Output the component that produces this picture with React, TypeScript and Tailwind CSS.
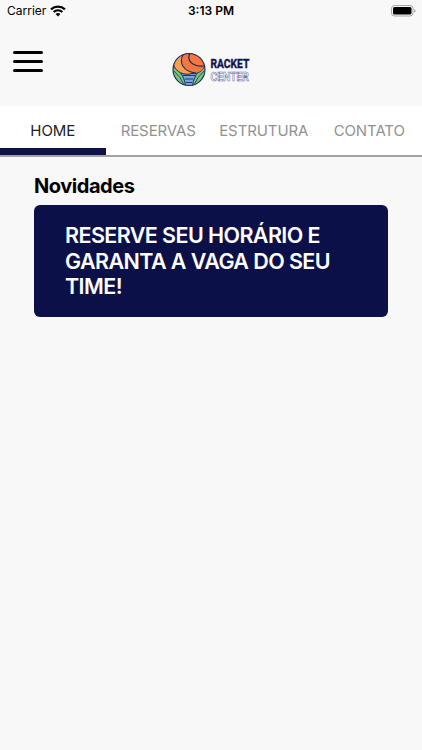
const tabs = [
  { label: "HOME", active: true },
  { label: "RESERVAS", active: false },
  { label: "ESTRUTURA", active: false },
  { label: "CONTATO", active: false },
];

function Wifi() {
  return (
    <svg width="16" height="12" viewBox="0 0 16 12" className="ml-[4px]" fill="none" stroke="#050505">
      <path d="M1 4.300C5 .6 11 .6 15 4.300" strokeWidth="2.300" />
      <path d="M3.600 7.100c2.500-2.300 6.300-2.300 8.800 0" strokeWidth="2.100" />
      <path d="M5.600 9c1.400-1.200 3.400-1.200 4.800 0L8 11.400z" fill="#050505" stroke="none" />
    </svg>
  );
}

function Battery() {
  return (
    <svg width="25" height="12" viewBox="0 0 25 12" className="mr-1.5">
      <rect x=".5" y=".5" width="21.5" height="10.5" rx="3" fill="none" stroke="#a5a5a5" />
      <rect x="2" y="2" width="18.5" height="7.5" rx="1.5" fill="#000" />
      <path d="M23.300 4v3.800q1.200-.6 1.200-1.900T23.300 4" fill="#999" />
    </svg>
  );
}

function Logo() {
  return (
    <svg width="84" height="44" viewBox="169 48 84 44">
      <defs>
        <clipPath id="emblem">
          <circle cx="189" cy="69.5" r="16" />
        </clipPath>
      </defs>
      <g clipPath="url(#emblem)" stroke="#1c2b5c" strokeWidth="1">
        <rect x="172" y="53" width="34" height="34" fill="#79a6dc" stroke="none" />
        <path d="M172 66C178 68 184 75 185.500 85.500L181 85C175 82 172 76 172 66Z" fill="#78c47c" />
        <path d="M206 66C200 68 194 75 192.500 85.500L197 85C203 82 206 76 206 66Z" fill="#78c47c" />
        <path d="M174 71q7 6 10 14M204 71q-7 6-10 14" fill="none" strokeWidth=".8" />
        <path d="M183 75.500h12M185 79h8M186 82.500h6" fill="none" strokeWidth=".9" />
        <path d="M173.500 65C173 58 180 53 189 53C198 53 205 58 204.500 65C203 71 198 74 192 73.500C184 76 176 72 173.500 65Z" fill="#f9a04f" />
        <path d="M184 53C179 62 184 71 195 73C200 72 203 70 204.500 65C205 58 198 53 191 53Z" fill="#f47640" stroke="none" />
        <path d="M183.500 54C178 63 184 72 196 73M190 53C186 61 193 67 204 66" fill="none" strokeWidth="1.200" />
      </g>
      <circle cx="189" cy="69.5" r="16" fill="none" stroke="#1b2b54" strokeWidth="1.100" />
      <g fontFamily="Roboto, sans-serif" fontWeight="700">
        <text transform="translate(210.4 68.2) scale(.79 1)" fontSize="13" fill="#10134d" stroke="#10134d" strokeWidth=".4">RACKET</text>
        <text transform="translate(210.6 81) scale(.79 1)" fontSize="13" fill="#f8f8ff" stroke="#6a6e9c" strokeWidth=".6">CENTER</text>
      </g>
    </svg>
  );
}

export default function App() {
  return (
    <div className="flex h-[750px] w-full flex-col overflow-hidden bg-[#f8f8f8] font-['Inter',sans-serif] text-black">
      <div className="grid h-[22px] shrink-0 grid-cols-3 items-center">
        <div className="flex items-center pl-[7px] text-xs leading-[22px]">
          <span>Carrier</span>
          <Wifi />
        </div>
        <span className="text-center text-xs leading-[22px] font-semibold">3:13 PM</span>
        <div className="flex justify-end"><Battery /></div>
      </div>

      <header className="grid h-[84px] shrink-0 grid-cols-3 pt-[26px]">
        <button aria-label="Menu" className="mt-[3px] ml-[13px] flex h-[21px] w-[30px] flex-col justify-between self-start">
          <span className="h-[3px] w-full rounded-full bg-black" />
          <span className="h-[3px] w-full rounded-full bg-black" />
          <span className="h-[3px] w-full rounded-full bg-black" />
        </button>
        <div className="flex items-start justify-center"><Logo /></div>
      </header>

      <nav className="grid h-[51px] shrink-0 grid-cols-4 border-b-2 border-[#a2a2a4] bg-white">
        {tabs.map((tab) => (
          <div
            key={tab.label}
            className={
              tab.active
                ? "h-[49px] border-b-[7px] border-[#0d104a] text-center text-[15px] leading-[49px] tracking-[-0.1px] text-[#222]"
                : "h-[49px] text-center text-[15px] leading-[49px] tracking-[-0.1px] text-[#929292]"
            }
          >
            {tab.label}
          </div>
        ))}
      </nav>

      <main className="px-[34px] pt-[17px]">
        <h1 className="text-[20px] leading-6 font-bold tracking-[-0.45px]">Novidades</h1>
        <section className="mt-[7px] h-[112px] rounded-[6px] bg-[#0c1048] px-[31px] pt-[18px] text-[21.5px] leading-[25.7px] font-semibold tracking-[-0.58px] text-white">
          RESERVE SEU HORÁRIO E GARANTA A VAGA DO SEU TIME!
        </section>
      </main>
    </div>
  );
}
